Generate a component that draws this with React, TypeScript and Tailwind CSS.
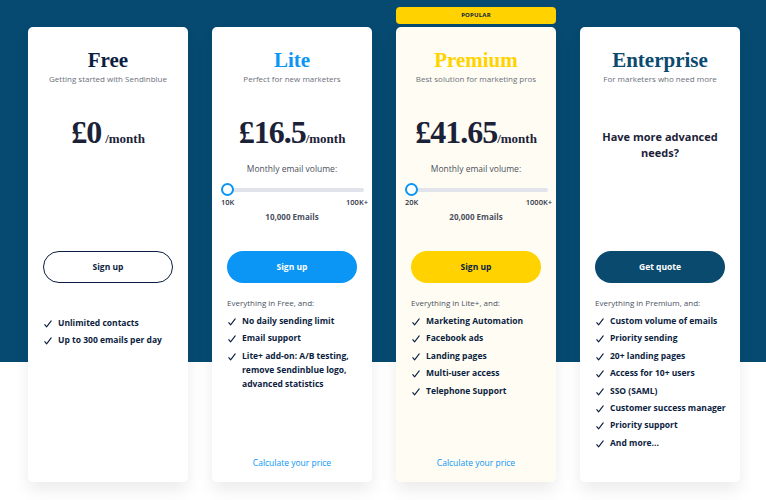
import React from "react";

type Plan = {
  title: string;
  titleColor: string;
  subtitle: string;
  price?: string;
  spaced?: boolean;
  slider?: { min: string; max: string; emails: string };
  question?: boolean;
  button: string;
  buttonClass: string;
  intro?: string;
  features: string[];
  calc?: boolean;
  bg: string;
  popular?: boolean;
};

const plans: Plan[] = [
  {
    title: "Free",
    titleColor: "text-[#0b1d40]",
    subtitle: "Getting started with Sendinblue",
    price: "£0",
    spaced: true,
    button: "Sign up",
    buttonClass: "border-[1.5px] border-[#0b1d40] text-[#0b1d40] bg-white",
    features: ["Unlimited contacts", "Up to 300 emails per day"],
    bg: "bg-white",
  },
  {
    title: "Lite",
    titleColor: "text-[#0b96f5]",
    subtitle: "Perfect for new marketers",
    price: "£16.5",
    slider: { min: "10K", max: "100K+", emails: "10,000 Emails" },
    button: "Sign up",
    buttonClass: "bg-[#0b96f5] text-white",
    intro: "Everything in Free, and:",
    features: [
      "No daily sending limit",
      "Email support",
      "Lite+ add-on: A/B testing, remove Sendinblue logo, advanced statistics",
    ],
    calc: true,
    bg: "bg-white",
  },
  {
    title: "Premium",
    titleColor: "text-[#ffd200]",
    subtitle: "Best solution for marketing pros",
    price: "£41.65",
    slider: { min: "20K", max: "1000K+", emails: "20,000 Emails" },
    button: "Sign up",
    buttonClass: "bg-[#ffd200] text-[#0b1d40]",
    intro: "Everything in Lite+, and:",
    features: [
      "Marketing Automation",
      "Facebook ads",
      "Landing pages",
      "Multi-user access",
      "Telephone Support",
    ],
    calc: true,
    bg: "bg-[#fffdf3]",
    popular: true,
  },
  {
    title: "Enterprise",
    titleColor: "text-[#0b4a6f]",
    subtitle: "For marketers who need more",
    question: true,
    button: "Get quote",
    buttonClass: "bg-[#0b4a6f] text-white",
    intro: "Everything in Premium, and:",
    features: [
      "Custom volume of emails",
      "Priority sending",
      "20+ landing pages",
      "Access for 10+ users",
      "SSO (SAML)",
      "Customer success manager",
      "Priority support",
      "And more...",
    ],
    bg: "bg-white",
  },
];

const serif = "font-['Liberation_Serif','Times_New_Roman',serif]";

function Check() {
  return (
    <svg width="8" height="8" viewBox="0 0 8 8" className="mt-[4px] shrink-0">
      <path d="M0.8 4.6 L2.6 6.9 L7.2 0.9" fill="none" stroke="#0b1d40" strokeWidth="1.1" strokeLinecap="round" strokeLinejoin="round" />
    </svg>
  );
}

function Card({ p }: { p: Plan }) {
  return (
    <div className={`relative w-[160px] h-[455px] shrink-0 rounded-[5px] ${p.bg} shadow-[0_8px_16px_rgba(0,0,0,0.08)] flex flex-col`}>
      {p.popular && (
        <div className="absolute left-0 right-0 top-[-20px] h-[17px] rounded-[4px] bg-[#ffd200] flex items-center justify-center text-[6px] font-bold text-[#0b1d40] tracking-[0.2px]">
          POPULAR
        </div>
      )}
      <div className="h-[224px] pt-[21px] flex flex-col items-center text-center shrink-0">
        <div className={`${serif} font-bold text-[21px] leading-[24px] ${p.titleColor}`}>{p.title}</div>
        <div className="mt-[1px] text-[8px] leading-[12px] text-[#6b6f7a]">{p.subtitle}</div>
        {p.price && (
          <div className={`${serif} mt-[29px] font-bold text-[#1b2238] leading-[36px] whitespace-nowrap`}>
            <span className="text-[32px] tracking-[-1px]">{p.price}</span>
            {p.spaced ? " " : ""}
            <span className="text-[13px]">/month</span>
          </div>
        )}
        {p.question && (
          <div className="mt-[44px] px-[12px] text-[11px] leading-[16px] font-bold text-[#1b2238]">
            Have more advanced needs?
          </div>
        )}
        {p.slider && (
          <div className="w-full mt-[6px]">
            <div className="text-[8.5px] leading-[12px] text-[#4b5060]">Monthly email volume:</div>
            <div className="mt-[8px] ml-[15px] mr-[8px] h-[13px] relative flex items-center">
              <div className="w-full h-[4px] rounded-full bg-[#e2e4ec]" />
              <div className="absolute left-[-6px] top-0 w-[13px] h-[13px] rounded-full bg-white border-[2.5px] border-[#0b96f5]" />
            </div>
            <div className="ml-[9px] mr-[4px] mt-[1px] flex justify-between text-[7.5px] leading-[10px] font-semibold text-[#2c3245]">
              <span>{p.slider.min}</span>
              <span>{p.slider.max}</span>
            </div>
            <div className="mt-[5px] text-[8px] leading-[10px] font-bold text-[#4b5060]">{p.slider.emails}</div>
          </div>
        )}
      </div>
      <div className="px-[15px] shrink-0">
        <div className={`h-[32px] rounded-full flex items-center justify-center text-[8.5px] font-bold ${p.buttonClass}`}>
          {p.button}
        </div>
      </div>
      <div className={`pl-[15px] pr-[8px] ${p.intro ? "mt-[14px]" : "mt-[33px]"}`}>
        {p.intro && <div className="text-[8px] leading-[12px] text-[#4b5060] mb-[5px]">{p.intro}</div>}
        <div className="flex flex-col gap-[3.4px]">
          {p.features.map((f) => (
            <div key={f} className="flex items-start">
              <div className="w-[15px] shrink-0 pl-[1px]">
                <Check />
              </div>
              <div className="text-[8.5px] leading-[14px] font-bold text-[#0b1d40]">{f}</div>
            </div>
          ))}
        </div>
      </div>
      {p.calc && (
        <div className="mt-auto pb-[13px] text-center text-[8.5px] leading-[12px] text-[#0b96f5]">Calculate your price</div>
      )}
    </div>
  );
}

export default function App() {
  return (
    <div className="w-[766px] h-[500px] overflow-hidden bg-[linear-gradient(#064a72_362px,#ffffff_362px)] font-['Open_Sans','Liberation_Sans',sans-serif]">
      <div className="flex gap-[24px] pl-[28px] pt-[27px]">
        {plans.map((p) => (
          <Card key={p.title} p={p} />
        ))}
      </div>
    </div>
  );
}
